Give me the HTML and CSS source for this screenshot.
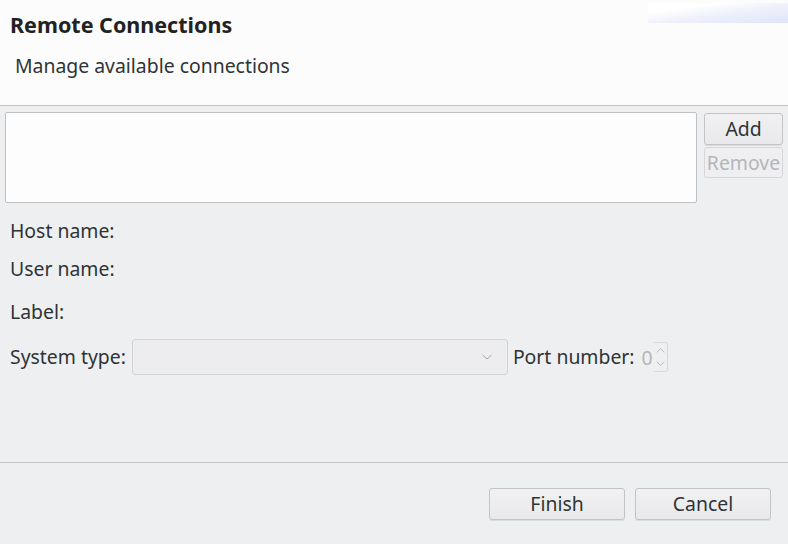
FILE: index.html
```html
<!DOCTYPE html>
<html>
<head>
<meta charset="utf-8">
<link rel="stylesheet" href="styles.css">
</head>
<body>
<div class="dialog">
  <header class="header">
    <div class="banner"></div>
    <div class="title">Remote Connections</div>
    <div class="subtitle">Manage available connections</div>
  </header>
  <main class="body">
    <div class="list-row">
      <div class="listbox"></div>
      <div class="side-buttons">
        <button class="btn">Add</button>
        <button class="btn disabled">Remove</button>
      </div>
    </div>
    <div class="field host">Host name:</div>
    <div class="field user">User name:</div>
    <div class="field label">Label:</div>
    <div class="sys-row">
      <span class="field-label">System type:</span>
      <div class="combo">
        <svg class="chev" width="12" height="8" viewBox="0 0 12 8"><path d="M1.5 2 L6 6 L10.5 2" fill="none" stroke="#a8a8a8" stroke-width="1"/></svg>
      </div>
      <span class="field-label port-label">Port number:</span>
      <span class="port-val">0</span>
      <div class="spinner">
        <svg width="14" height="28" viewBox="0 0 14 28"><path d="M3 9 L7 5 L11 9" fill="none" stroke="#b4b4b4" stroke-width="1"/><path d="M3 19 L7 23 L11 19" fill="none" stroke="#b4b4b4" stroke-width="1"/></svg>
      </div>
    </div>
  </main>
  <footer class="footer">
    <button class="btn big">Finish</button>
    <button class="btn big">Cancel</button>
  </footer>
</div>
</body>
</html>
```
FILE: styles.css
```css
html, body {
  margin: 0;
  padding: 0;
}
body {
  width: 788px;
  height: 544px;
  background: #eeeff1;
  font-family: "Noto Sans", "Open Sans", sans-serif;
  font-size: 19.4px;
  color: #2e3436;
  overflow: hidden;
}
.dialog {
  display: flex;
  flex-direction: column;
  height: 544px;
}
.header {
  position: relative;
  height: 105px;
  background: #fcfcfc;
  border-bottom: 1px solid #c4c4c6;
  box-sizing: content-box;
}
.banner {
  position: absolute;
  left: 648px;
  top: 3px;
  width: 140px;
  height: 20px;
  background: linear-gradient(172deg, #ffffff 0%, #ffffff 25%, #eef1fb 55%, #dfe5f8 100%);
}
.title {
  position: relative;
  padding: 12px 0 0 10px;
  font-weight: bold;
  font-size: 21.5px;
  line-height: 26px;
  color: #222;
}
.subtitle {
  position: relative;
  padding: 15px 0 0 15px;
  line-height: 26px;
  font-size: 19.4px;
}
.body {
  flex: 1;
  padding: 6px 5px 0 5px;
}
.list-row {
  display: flex;
  gap: 7px;
}
.listbox {
  width: 690px;
  height: 89px;
  background: #fdfdfd;
  border: 1px solid #bfc0c2;
  border-radius: 2px;
}
.side-buttons {
  display: flex;
  flex-direction: column;
  gap: 2px;
  padding-top: 1px;
}
.btn {
  font-family: inherit;
  font-size: 19.4px;
  color: #2e3436;
  width: 79px;
  height: 32px;
  padding: 0;
  background: linear-gradient(#f1f1f2, #e9e9eb);
  border: 1px solid #c3c3c6;
  border-radius: 3px;
  box-shadow: 0 1px 0 rgba(0,0,0,0.08);
  line-height: 28px;
}
.btn.disabled {
  color: #b4b6b8;
  background: #efeff1;
  border-color: #d6d7d9;
  box-shadow: none;
  height: 31px;
}
.field {
  padding-left: 5px;
  line-height: 24px;
}
.host { margin-top: 16px; }
.user { margin-top: 14px; }
.label { margin-top: 19px; }
.sys-row {
  display: flex;
  align-items: center;
  margin-top: 15px;
  padding-left: 5px;
}
.field-label {
  line-height: 24px;
}
.combo {
  width: 376px;
  height: 36px;
  margin-left: 6px;
  border: 1px solid #d3d4d6;
  border-radius: 3px;
  background: #ededef;
  display: flex;
  align-items: center;
  justify-content: flex-end;
  padding-right: 14px;
  box-sizing: border-box;
}
.port-label {
  margin-left: 5px;
}
.port-val {
  margin-left: 7px;
  color: #b3b6b9;
}
.spinner {
  width: 13px;
  height: 28px;
  margin-left: 1px;
  border: 1px solid #d8d9db;
  border-left: none;
  border-radius: 0 3px 3px 0;
  display: flex;
  align-items: center;
  justify-content: center;
  overflow: hidden;
}
.footer {
  height: 82px;
  border-top: 1px solid #c4c4c6;
  display: flex;
  justify-content: flex-end;
  align-items: flex-start;
  gap: 10px;
  padding: 25px 17px 0 0;
  box-sizing: border-box;
}
.btn.big {
  width: 136px;
  height: 32px;
}
```
